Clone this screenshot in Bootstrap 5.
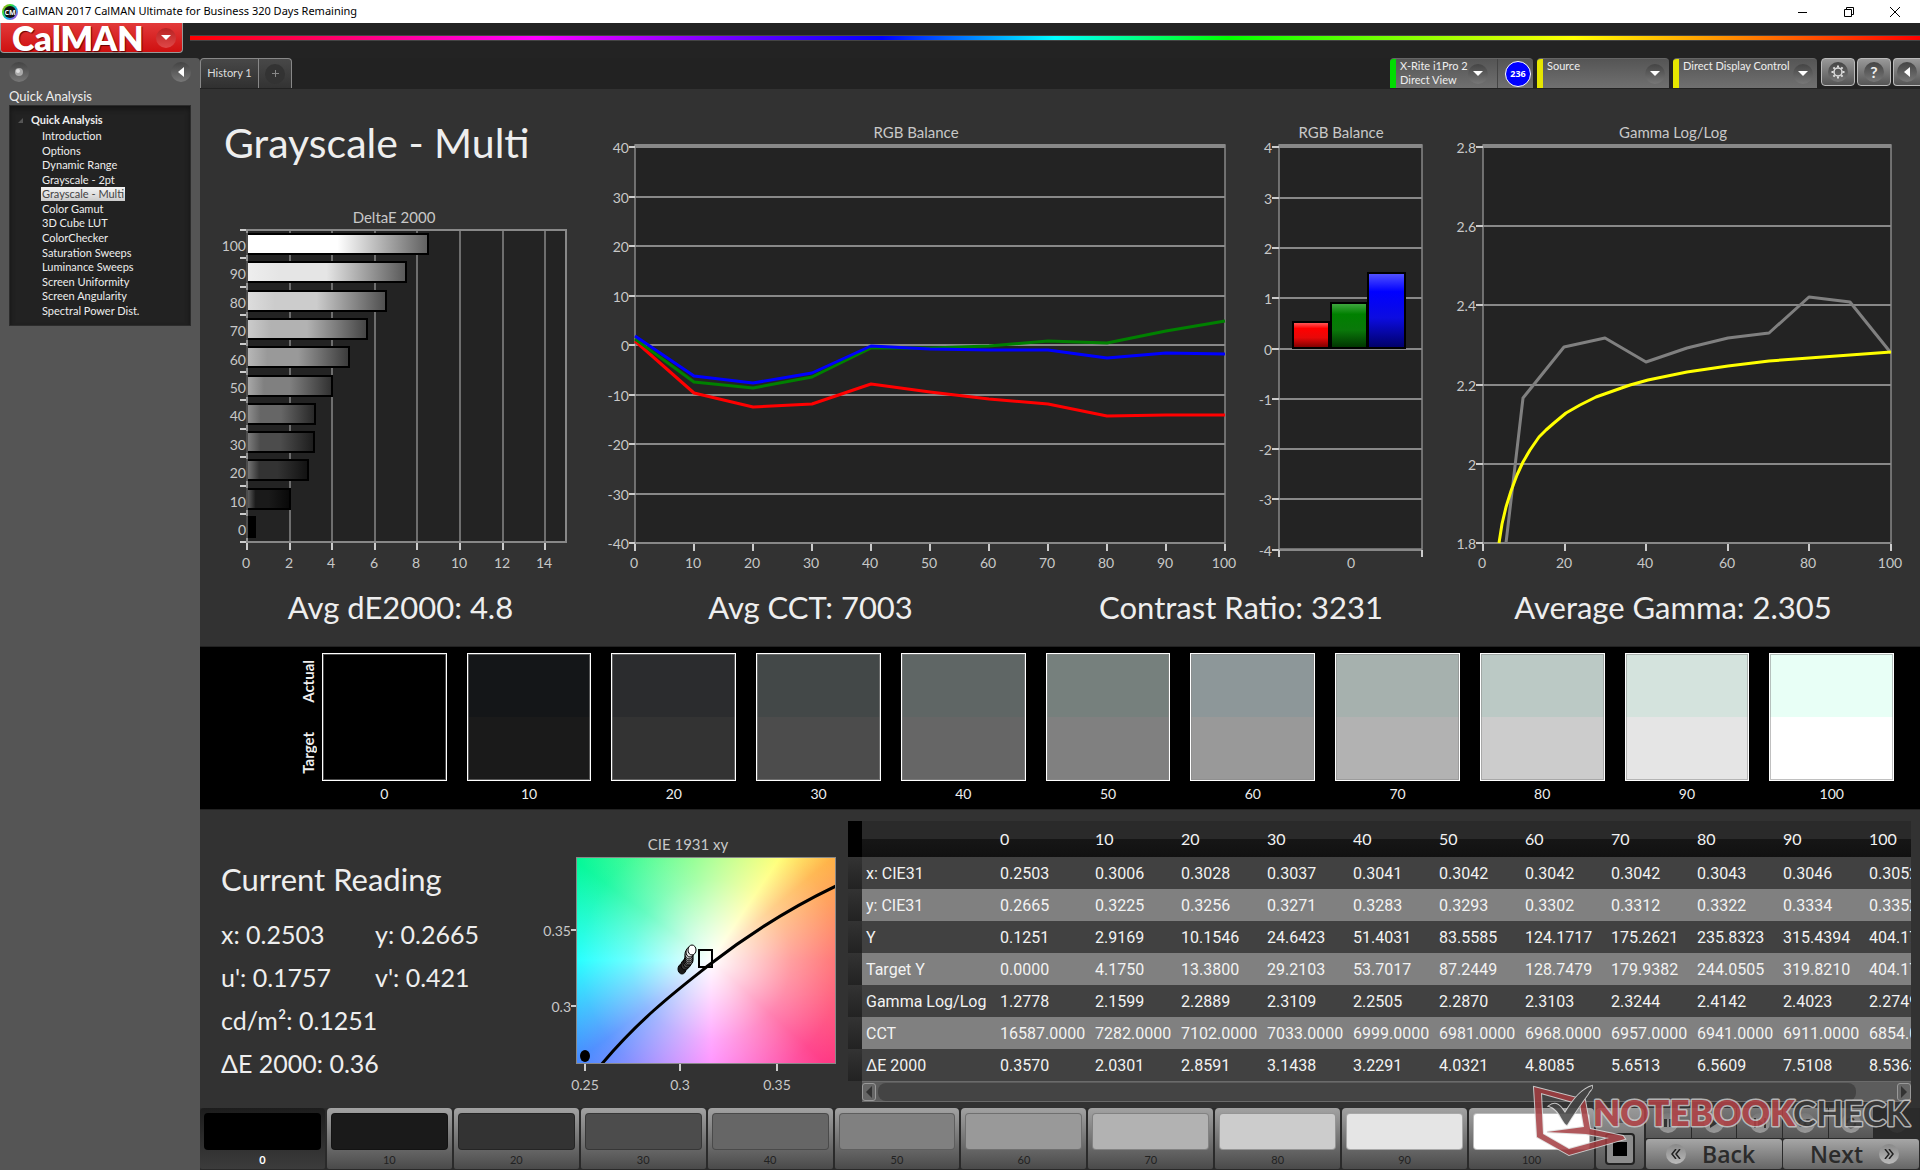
<!DOCTYPE html>
<html lang="en">
<head>
<meta charset="utf-8">
<meta name="viewport" content="width=device-width, initial-scale=1">
<title>CalMAN 2017 CalMAN Ultimate for Business</title>
<link href="https://cdn.jsdelivr.net/npm/bootstrap@5.3.0/dist/css/bootstrap.min.css" rel="stylesheet">
<style>
  body { font-family: Lato, "Open Sans", sans-serif; font-size: 11px; background: #222; color: #eee; }
  button { font: inherit; color: inherit; border: 0; padding: 0; }
  svg { display: block; }

  .titlebar { height: 23px; background: #fff; color: #000; font-family: "Noto Sans", sans-serif; padding: 0 2px; }
  .win-btn { width: 46px; height: 22px; background: none; }

  .brandbar { height: 35px; background: #232323; }
  .brand-btn { width: 183px; height: 30px; background: linear-gradient(#e23a3a, #cf1010); border: 1px solid #999; border-top: 0; border-radius: 0 0 4px 4px; color: #fff; padding: 0 6px 0 11px; }
  .brand-word { font: 800 34px/26px Lato, sans-serif; text-shadow: 1px 1px 1px #600; }
  .knob { width: 20px; height: 20px; border-radius: 50%; flex: none; }
  .knob-red { background: linear-gradient(#b82222, #e04848); }
  .knob-gray { background: linear-gradient(#444, #777); }
  .knob-dark { background: #333; }
  .spectrum { height: 6px; margin: 12px 0 0 7px; border: solid #444; border-width: 1px 0; background: linear-gradient(90deg, #f00, #f0f 20%, #00f 40%, #0ff 50%, #0f0 60%, #ff0 80%, #f00); }

  .sidebar { width: 200px; background: #555; border-top-right-radius: 4px; flex: none; }
  .sidebar-head { height: 28px; padding: 0 9px; }
  .sidebar-title { font-size: 13px; line-height: 21px; height: 19px; padding-left: 9px; margin: 0; font-weight: 400; }
  .tree-box { margin: 0 9px; height: 221px; background: #222; border: 1px solid #2c2c2c; box-shadow: inset 0 3px 5px #151515; padding: 7px 8px; }
  .tree-root { font-weight: 700; line-height: 14px; }
  .tree-list { height: 189px; padding-left: 23px; margin: 2px 0 0; }
  .tree-list a { color: #eee; text-decoration: none; line-height: 14px; padding: 0 1px; display: block; }
  .tree-list a.current { background: linear-gradient(#f4f4f4, #ccc); color: #444; }

  .tabstrip { height: 30px; background: #222; }
  .hist-tab { height: 30px; border: 1px solid #888; border-bottom: 0; background: linear-gradient(#484848, #303030); color: #ddd; border-radius: 4px 0 0 0; width: 59px; }
  .hist-add { height: 30px; width: 33px; border: 1px solid #888; border-left: 0; border-bottom: 0; background: linear-gradient(#484848, #333); border-radius: 0 4px 0 0; }
  .dev-tab { height: 30px; background: linear-gradient(#555, #707070); border-top: 1px solid #666; border-radius: 4px 4px 0 0; overflow: hidden; text-align: left; line-height: 14px; }
  .dev-meter { width: 143px; }
  .dev-source { width: 132px; }
  .dev-display { width: 144px; }
  .dev-meter .dev-name { width: 72px; }
  .dev-flag { width: 6px; flex: none; }
  .flag-ok { background: #0d0; }
  .flag-wait { background: #e6e600; }
  .badge-cell { border-left: 1px solid #444; margin-left: 9px; padding-left: 7px; }
  .tool-btn { width: 34px; height: 28px; border: 1px solid #bbb; border-radius: 4px; background: linear-gradient(#999, #555); }
  .tool-btn.help { margin: 0 2px; }
  .tool-btn.help .knob { font-size: 16px; line-height: 20px; }
  .tool-btn.edge { width: 27px; }
  .count-badge { width: 26px; height: 26px; border-radius: 50%; background: #00f; border: 1px solid #fff; font: 700 9px/24px "Open Sans", sans-serif; color: #fff; text-align: center; }

  .pane { background: #323232; border-top: 1px solid #222; }
  .page-title { font-size: 41px; line-height: 50px; height: 117px; padding: 29px 0 0 24px; margin: 0; font-weight: 400; }
  .w-delta { flex: 380 1 0; min-width: 0; }
  .w-balance { flex: 670 1 0; min-width: 0; }
  .w-bars { flex: 190 1 0; min-width: 0; }
  .w-gamma { flex: 480 1 0; min-width: 0; }
  .stats { font-size: 31px; line-height: 60px; height: 69px; display: grid; grid-template-columns: 401fr 419fr 442fr 422fr 36fr; text-align: center; }
  .strip { background: #000; border-top: 1px solid #222; height: 163px; padding: 6px 26px 0 100px; }
  .strip-side { width: 16px; height: 128px; margin-right: 6px; padding: 7px 0; font-size: 15px; font-weight: 700; }
  .strip-side span { writing-mode: vertical-rl; transform: rotate(180deg); line-height: 16px; }
  .swatch-row { gap: 20px; }
  .swatch { height: 128px; border: 1px solid #fff; box-shadow: inset 0 0 0 1px #8888; }
  .swatch-label { font-size: 14px; line-height: 26px; text-align: center; }

  .w-reading { flex: 330 1 0; min-width: 0; }
  .w-cie { flex: 318 1 0; min-width: 0; }
  .w-table { flex: 1072 1 0; min-width: 0; }
  .reading { padding: 52px 0 0 21px; }
  .reading h2 { font-size: 31px; line-height: 34px; margin: 0 0 17px; font-weight: 400; }
  .reading dl { font-size: 25px; line-height: 43px; margin: 0; }
  .reading dl > div:first-child, .reading dl > div:nth-child(3) { width: 154px; }
  .reading dl > div { white-space: nowrap; }
  .reading dt, .reading dd { font-weight: 400; margin: 0; display: inline; }
  .cie-field { width: 260px; height: 207px; border: 1px solid #888; background:
    radial-gradient(circle at 134px 102px, #fff 0, rgba(255,255,255,.75) 35px, rgba(255,255,255,.4) 80px, rgba(255,255,255,.12) 130px, rgba(255,255,255,0) 170px),
    conic-gradient(from 0deg at 134px 102px, #90ff70 0, #ffff60 34deg, #ffb040 50deg, #ff6060 90deg, #ff3080 132deg, #ff70ff 180deg, #4488ff 233deg, #10ffff 270deg, #00f898 306deg, #70ff70 350deg, #90ff70 360deg); }

  .grid-area { padding: 11px 9px 0 0; }
  .grid-wrap { overflow: hidden; }
  .results { width: 1103px; table-layout: fixed; border-collapse: collapse; font: 16px/20px Roboto, sans-serif; color: #f2f2f2; }
  .results .c-mark { width: 14px; }
  .results .c-name { width: 134px; }
  .results .c-first { width: 95px; }
  .results th, .results td { font-weight: 400; padding: 2px 0 0 4px; white-space: nowrap; height: 32px; }
  .results thead th { height: 36px; padding-top: 0; background: linear-gradient(#2a2a2a 50%, #161616 51%, #111); font-family: Lato, sans-serif; }
  .results thead th:first-child { background: #000; }
  .results tbody tr { background: #414141; }
  .results tbody tr:nth-child(even) { background: #808080; }
  .results tbody td:first-child { background: linear-gradient(#333, #222); }
  .hbar { height: 21px; margin-left: 14px; background: #5c5c5c; border: solid #6b6b6b; border-width: 1px 0; }
  .hbar-btn { width: 14px; height: 18px; border: 1px solid #999; border-radius: 3px; background: #666; flex: none; }
  .hbar-thumb { background: #444; border-radius: 8px; height: 18px; margin: 0 41px 0 2px; }

  .footbar { height: 62px; background: #2a2a2a; }
  .level-row { gap: 2px; }
  .level-btn { background: linear-gradient(#a2a2a2, #4a4a4a); border-radius: 4px 4px 2px 2px; height: 61px; padding: 5px 4px 0; color: #222; font-size: 11px; }
  .level-btn.active { background: linear-gradient(#1c1c1c, #3c3c3c); color: #fff; font-weight: 700; }
  .level-chip { height: 37px; border-radius: 4px; border: 1px solid #0004; }
  .level-text { line-height: 20px; }
  .stop-col { width: 48px; background: linear-gradient(#999, #555); border-radius: 4px; height: 61px; margin: 0 2px; flex: none; }
  .stop-btn { width: 30px; height: 32px; border: 2px solid #222; border-radius: 4px; background: #8c8c8c; }
  .stop-btn span { width: 14px; height: 14px; background: #000; }
  .transport { width: 273px; flex: none; margin-right: 1px; gap: 1px; }
  .transport-row { gap: 1px; }
  .play-btn { height: 30px; background: linear-gradient(#777, #555); }
  .play-btn.off { background: #2b2b2b; }
  .play-btn .knob { background: linear-gradient(#777, #999); }
  .play-btn.off .knob { background: #333; }
  .nav-btn { height: 30px; background: linear-gradient(#a6a6a6, #666); color: #2b2b2b; font: 600 23px/28px "Open Sans", sans-serif; border-radius: 3px; padding: 0 20px; gap: 16px; }
  .nav-btn .knob { background: linear-gradient(#888, #bbb); }
  .watermark { position: absolute; right: 6px; bottom: 8px; width: 384px; height: 80px; pointer-events: none; }

  svg .axis-text { fill: #c8c8c8; font-size: 14px; }
  svg .chart-title { fill: #c8c8c8; font-size: 15px; text-anchor: middle; }
</style>
<script src="https://cdn.jsdelivr.net/npm/bootstrap@5.3.0/dist/js/bootstrap.bundle.min.js"></script>
</head>
<body class="min-vh-100 d-flex flex-column position-relative overflow-x-hidden">

<header>
  <div class="titlebar d-flex align-items-center">
    <svg width="16" height="16" viewBox="0 0 16 16"><defs><linearGradient id="ring" x1="0" y1="0" x2="1" y2="1"><stop offset="0" stop-color="#f80"/><stop offset=".3" stop-color="#3d3"/><stop offset=".6" stop-color="#1ae"/><stop offset="1" stop-color="#e2c"/></linearGradient></defs><circle cx="8" cy="8" r="8" fill="url(#ring)"/><circle cx="8" cy="8" r="6" fill="#111"/><text x="8" y="10.500" font-size="7" font-weight="700" fill="#fff" text-anchor="middle" font-family="Open Sans">CM</text></svg>
    <span class="ps-1 me-auto">CalMAN 2017 CalMAN Ultimate for Business 320 Days Remaining</span>
    <button class="win-btn" aria-label="Minimize"><svg class="mx-auto" width="10" height="10"><path d="M0 5.500h9" stroke="#000"/></svg></button>
    <button class="win-btn" aria-label="Restore"><svg class="mx-auto" width="10" height="10" fill="none" stroke="#000"><path d="M.5 2.500h7v7h-7zM2.500 2.500v-2h7v7h-2"/></svg></button>
    <button class="win-btn" aria-label="Close"><svg class="mx-auto" width="10" height="10" stroke="#000"><path d="M0 0l10 10M10 0L0 10"/></svg></button>
  </div>
  <div class="brandbar d-flex">
    <button class="brand-btn d-flex justify-content-between align-items-center flex-shrink-0" aria-label="CalMAN menu"><span class="brand-word">CalMAN</span>
      <span class="knob knob-red d-flex align-items-center justify-content-center"><svg width="10" height="6"><path d="M0 0h10L5 5z" fill="#fff"/></svg></span></button>
    <div class="spectrum flex-fill"></div>
  </div>
</header>

<div class="d-flex flex-fill">
  <aside class="sidebar">
    <div class="sidebar-head d-flex justify-content-between align-items-center">
      <span class="knob knob-gray d-flex align-items-center justify-content-center"><svg width="8" height="8"><circle cx="4" cy="4" r="4" fill="#aaa"/><circle cx="3" cy="3" r="2" fill="#ddd"/></svg></span>
      <button class="knob knob-gray d-flex align-items-center justify-content-center" aria-label="Collapse"><svg width="6" height="10"><path d="M6 0v10L0 5z" fill="#fff"/></svg></button>
    </div>
    <h2 class="sidebar-title">Quick Analysis</h2>
    <nav class="tree-box">
      <div class="tree-root d-flex align-items-center"><svg class="me-2" width="5" height="5"><path d="M5 0v5H0z" fill="#555"/></svg>Quick Analysis</div>
      <ul class="tree-list list-unstyled d-flex flex-column justify-content-between align-items-start">
        <li><a href="#">Introduction</a></li><li><a href="#">Options</a></li><li><a href="#">Dynamic Range</a></li><li><a href="#">Grayscale - 2pt</a></li><li><a href="#" class="current">Grayscale - Multi</a></li><li><a href="#">Color Gamut</a></li><li><a href="#">3D Cube LUT</a></li><li><a href="#">ColorChecker</a></li><li><a href="#">Saturation Sweeps</a></li><li><a href="#">Luminance Sweeps</a></li><li><a href="#">Screen Uniformity</a></li><li><a href="#">Screen Angularity</a></li><li><a href="#">Spectral Power Dist.</a></li>
      </ul>
    </nav>
  </aside>

  <main class="flex-fill d-flex flex-column overflow-hidden">
    <div class="tabstrip d-flex">
      <button class="hist-tab">History 1</button>
      <button class="hist-add d-flex align-items-center justify-content-center me-auto" aria-label="Add tab"><span class="knob knob-dark d-flex align-items-center justify-content-center"><svg width="7" height="7" stroke="#888"><path d="M3.500 0v7M0 3.500h7"/></svg></span></button>

      <button class="dev-tab dev-meter d-flex me-1"><span class="dev-flag flag-ok h-100"></span><span class="dev-name ps-1 text-nowrap">X-Rite i1Pro 2<br>Direct View</span>
        <span class="knob knob-gray d-flex align-items-center justify-content-center align-self-center"><svg width="10" height="6"><path d="M0 0h10L5 5z" fill="#fff"/></svg></span>
        <span class="badge-cell h-100 d-flex align-items-center"><span class="count-badge">236</span></span></button>
      <button class="dev-tab dev-source d-flex me-1"><span class="dev-flag flag-wait h-100"></span><span class="ps-1 flex-fill">Source</span><span class="knob knob-gray d-flex align-items-center justify-content-center align-self-center me-1"><svg width="10" height="6"><path d="M0 0h10L5 5z" fill="#fff"/></svg></span></button>
      <button class="dev-tab dev-display d-flex me-1"><span class="dev-flag flag-wait h-100"></span><span class="ps-1 flex-fill text-nowrap">Direct Display Control</span><span class="knob knob-gray d-flex align-items-center justify-content-center align-self-center me-1"><svg width="10" height="6"><path d="M0 0h10L5 5z" fill="#fff"/></svg></span></button>
      <button class="tool-btn d-flex align-items-center justify-content-center" aria-label="Settings"><span class="knob knob-gray d-flex align-items-center justify-content-center"><svg width="14" height="14" viewBox="-7 -7 14 14" fill="none" stroke="#ddd"><circle r="4" stroke-width="1.500"/><path stroke-width="2" d="M0-6.500v2M0 4.500v2M-6.500 0h2M4.500 0h2M-4.600-4.600l1.400 1.400M3.200 3.200l1.400 1.400M-4.600 4.600l1.400-1.400M3.200-3.200l1.400-1.400"/></svg></span></button>
      <button class="tool-btn help d-flex align-items-center justify-content-center" aria-label="Help"><span class="knob knob-gray fw-bold text-center">?</span></button>
      <button class="tool-btn edge d-flex align-items-center justify-content-center border-end-0 rounded-end-0" aria-label="Hide"><span class="knob knob-gray d-flex align-items-center justify-content-center"><svg width="6" height="10"><path d="M6 0v10L0 5z" fill="#fff"/></svg></span></button>
    </div>

    <section class="pane">
      <div class="d-flex">
        <div class="w-delta"><h1 class="page-title text-nowrap">Grayscale - Multi</h1><svg id="deltae" class="w-100" viewBox="200 206 380 371"></svg></div>
        <div class="w-balance"><svg id="balance" class="w-100" viewBox="580 89 670 488"></svg></div>
        <div class="w-bars"><svg id="bars" class="w-100" viewBox="1250 89 190 488"></svg></div>
        <div class="w-gamma"><svg id="gamma" class="w-100" viewBox="1440 89 480 488"></svg></div>
      </div>
      <div class="stats"><span>Avg dE2000: 4.8</span><span>Avg CCT: 7003</span><span>Contrast Ratio: 3231</span><span>Average Gamma: 2.305</span></div>
    </section>

    <section class="strip d-flex">
      <div class="strip-side d-flex flex-column justify-content-between"><span>Actual</span><span>Target</span></div>
      <div id="swatches" class="swatch-row d-flex flex-fill"></div>
    </section>

    <section class="pane d-flex flex-fill">
      <div class="w-reading"><div class="reading">
        <h2>Current Reading</h2>
        <dl class="d-flex flex-wrap">
          <div><dt>x:</dt> <dd>0.2503</dd></div><div><dt>y:</dt> <dd>0.2665</dd></div>
          <div><dt>u':</dt> <dd>0.1757</dd></div><div><dt>v':</dt> <dd>0.421</dd></div>
          <div class="w-100"><dt>cd/m²:</dt> <dd>0.1251</dd></div>
          <div class="w-100"><dt>ΔE 2000:</dt> <dd>0.36</dd></div>
        </dl>
      </div></div>
      <div class="w-cie">
        <svg class="w-100" viewBox="530 810 318 298">
          <defs>
            <clipPath id="cieClip"><rect x="577" y="858" width="258" height="205"/></clipPath>
          </defs>
          <text class="chart-title" x="688" y="850">CIE 1931 xy</text>
          <foreignObject x="576" y="857" width="260" height="207"><div class="cie-field"></div></foreignObject>
          <path clip-path="url(#cieClip)" d="M601 1065C640 1018 680 988 709 965C745 937 790 908 836 886" fill="none" stroke="#000" stroke-width="3"/>
          <g stroke="#000">
            <ellipse cx="682" cy="969" rx="4" ry="5" fill="#1a1a1a"/><ellipse cx="685" cy="965" rx="4" ry="5" fill="#333"/><ellipse cx="687" cy="963" rx="4" ry="5" fill="#4c4c4c"/><ellipse cx="688" cy="961" rx="4" ry="5" fill="#666"/><ellipse cx="689" cy="960" rx="4" ry="5" fill="#808080"/><ellipse cx="689" cy="958" rx="4" ry="5" fill="#999"/><ellipse cx="689" cy="956" rx="4" ry="5" fill="#b2b2b2"/><ellipse cx="689" cy="954" rx="4" ry="5" fill="#ccc"/><ellipse cx="690" cy="952" rx="4" ry="5" fill="#e5e5e5"/><ellipse cx="692" cy="950" rx="4" ry="5" fill="#fff"/>
          </g>
          <ellipse cx="585" cy="1056" rx="5" ry="6"/>
          <rect x="699" y="950" width="13" height="17" fill="none" stroke="#000" stroke-width="2"/>
          <path d="M571 930h5M571 1006h5M585 1064v7M680 1064v7M777 1064v7" stroke="#ccc" stroke-width="2"/>
          <g class="axis-text"><g text-anchor="end"><text x="571" y="936">0.35</text><text x="571" y="1012">0.3</text></g>
          <g text-anchor="middle"><text x="585" y="1090">0.25</text><text x="680" y="1090">0.3</text><text x="777" y="1090">0.35</text></g></g>
        </svg>
      </div>
      <div class="w-table"><div class="grid-area">
        <div class="grid-wrap"><table class="results"><colgroup><col class="c-mark"><col class="c-name"><col class="c-first"></colgroup><thead id="thead"></thead><tbody id="tbody"></tbody></table></div>
        <div class="hbar d-flex align-items-center">
          <button class="hbar-btn d-flex align-items-center justify-content-center" aria-label="Scroll left"><svg width="6" height="12"><path d="M6 0v12L0 6z" fill="#333"/></svg></button>
          <div class="hbar-thumb flex-fill"></div>
          <button class="hbar-btn d-flex align-items-center justify-content-center" aria-label="Scroll right"><svg width="6" height="12"><path d="M0 0v12L6 6z" fill="#333"/></svg></button>
        </div>
      </div></div>
    </section>

    <footer class="footbar d-flex">
      <div id="levels" class="level-row d-flex flex-fill"></div>
      <div class="stop-col d-flex flex-column align-items-center justify-content-between pb-1">
        <svg width="12" height="20"><path d="M6 10l4 5H2z" fill="#555"/></svg>
        <button class="stop-btn d-flex align-items-center justify-content-center" aria-label="Stop"><span></span></button>
      </div>
      <div class="transport d-flex flex-column">
        <div class="transport-row d-flex">
          <button class="play-btn flex-fill" aria-label="Pause"><span class="knob d-flex mx-auto align-items-center justify-content-center"><svg width="8" height="8"><path d="M0 0h3v8H0zM5 0h3v8H5z" fill="#333"/></svg></span></button>
          <button class="play-btn flex-fill" aria-label="Play"><span class="knob d-flex mx-auto align-items-center justify-content-center"><svg width="8" height="10"><path d="M0 0l8 5-8 5z" fill="#333"/></svg></span></button>
          <button class="play-btn flex-fill" aria-label="Step"><span class="knob d-flex mx-auto align-items-center justify-content-center"><svg width="12" height="10"><path d="M0 0h2v10H0zM10 0h2v10h-2zM4 1l5 4-5 4z" fill="#333"/></svg></span></button>
          <button class="play-btn flex-fill" aria-label="Continuous"><span class="knob d-flex mx-auto align-items-center justify-content-center"><svg width="14" height="8" fill="none" stroke="#333" stroke-width="2"><circle cx="4" cy="4" r="3"/><circle cx="10" cy="4" r="3"/></svg></span></button>
          <button class="play-btn flex-fill" aria-label="Refresh"><span class="knob d-flex mx-auto align-items-center justify-content-center"><svg width="12" height="12" fill="none" stroke="#333" stroke-width="2"><path d="M2 6a4 4 0 0 1 7-3M10 6a4 4 0 0 1-7 3"/></svg></span></button>
          <button class="play-btn off flex-fill" aria-label="More"><span class="knob d-block mx-auto"></span></button>
        </div>
        <div class="transport-row d-flex">
          <button class="nav-btn w-50 d-flex align-items-center"><span class="knob d-flex align-items-center justify-content-center"><svg width="10" height="10" fill="none" stroke="#222" stroke-width="1.500"><path d="M5 0L1 5l4 5M9 0L5 5l4 5"/></svg></span>Back</button>
          <button class="nav-btn w-50 d-flex align-items-center justify-content-end">Next<span class="knob d-flex align-items-center justify-content-center"><svg width="10" height="10" fill="none" stroke="#222" stroke-width="1.500"><path d="M1 0l4 5-4 5M5 0l4 5-4 5"/></svg></span></button>
        </div>
      </div>
    </footer>
  </main>
</div>

<svg class="watermark" viewBox="1530 1082 384 80">
  <g opacity=".85">
    <path d="M1534 1087L1585 1100L1590 1129L1623 1136L1625 1139L1569 1155L1537 1137ZM1541 1093L1543 1134L1569 1149L1609 1138L1586 1134L1547 1132L1584 1127L1580 1104Z" fill="#a33c40" fill-rule="evenodd" stroke="#ddd" stroke-width="2" paint-order="stroke"/>
    <path d="M1549 1106C1556 1101 1560 1105 1565 1113C1574 1098 1582 1089 1592 1086C1593 1090 1590 1089 1588 1094C1580 1105 1573 1115 1567 1125C1562 1123 1560 1109 1549 1106Z" fill="#444" stroke="#ddd" stroke-width="2" paint-order="stroke"/>
    <g font-family="Lato, sans-serif" font-size="35" font-weight="700" stroke="#c8c8c8" stroke-width="3" paint-order="stroke" stroke-linejoin="round"><text x="1593" y="1126" font-weight="800" fill="#b34246">NOTEBOOK</text><text x="1793" y="1126" fill="#383838">CHECK</text></g>
  </g>
</svg>

<script>
  const levels = [0, 10, 20, 30, 40, 50, 60, 70, 80, 90, 100];
  const target = ['#000', '#1a1a1a', '#333', '#4c4c4c', '#666', '#808080', '#999', '#b2b2b2', '#ccc', '#e5e5e5', '#fff'];
  const actual = ['#000', '#141618', '#2b2c2e', '#434848', '#5f6665', '#76807d', '#8d9799', '#a6b1ae', '#bbc9c5', '#d4e3dd', '#e8fff6'];
  const put = (id, html) => document.getElementById(id).innerHTML = html;
  const text = (x, y, s, anchor) => `<text class="axis-text" x="${x}" y="${y}" text-anchor="${anchor}">${s}</text>`;
  const line = (x1, y1, x2, y2, c, w) => `<path d="M${x1} ${y1}L${x2} ${y2}" stroke="${c}" stroke-width="${w}" fill="none"/>`;
  const poly = (pts, c, w) => `<polyline points="${pts}" stroke="${c}" stroke-width="${w}" fill="none" stroke-linejoin="round"/>`;

  /* DeltaE 2000 horizontal bars */
  const de = [0.357, 2.0301, 2.8591, 3.1438, 3.2291, 4.0321, 4.8085, 5.6513, 6.5609, 7.5108, 8.5363];
  let s = '<defs>' + target.map((c, i) => `<linearGradient id="g${i}"><stop offset="0" stop-color="${['#333','#666','#7a7a7a','#808080','#909090','#aaa','#b8b8b8','#ccc','#ddd','#eee','#fff'][i]}"/><stop offset=".2" stop-color="${c}"/><stop offset=".5" stop-color="${c}"/><stop offset="1" stop-color="${['#000','#080808','#111','#1c1c1c','#262626','#303030','#3a3a3a','#444','#4e4e4e','#585858','#606060'][i]}"/></linearGradient>`).join('') + '</defs>';
  s += '<text class="chart-title" x="394" y="223">DeltaE 2000</text><rect x="247" y="230" width="319" height="312" fill="#232323" stroke="#888" stroke-width="2"/>';
  for (let v = 0; v < 15; v += 2) { const x = Math.round(247 + v * 21.3); if (v) s += line(x, 231, x, 541, '#888', 1.5); s += line(x, 543, x, 550, '#ccc', 2) + text(x - 1, 568, v, 'middle'); }
  for (let k = 0; k <= 11; k++) { const y = Math.round(230 + k * 28.4); s += line(240, y, 246, y, '#ccc', 2); if (k < 11) { const i = 10 - k, top = Math.round(234 + k * 28.3); s += text(246, y + 21, levels[i], 'end') + `<rect x="247" y="${top}" width="${Math.round(de[i] * 21.2)}" height="20" fill="url(#g${i})" stroke="#000" stroke-width="2"/>`; } }
  put('deltae', s + line(247, 230, 247, 542, '#999', 1));

  /* RGB balance over the gray ramp */
  s = '<text class="chart-title" x="916" y="138">RGB Balance</text><rect x="635" y="145" width="590" height="398" fill="#232323" stroke="#888" stroke-width="1.500"/>' + line(635, 146, 1225, 146, '#888', 4);
  for (let v = 40; v >= -40; v -= 10) { const y = Math.round(345 - v * 4.95); s += line(635, y, 1225, y, '#888', 2) + line(629, y, 635, y, '#ccc', 2) + text(629, y + 6, v, 'end'); }
  levels.forEach(v => { const x = 635 + v * 5.9; s += line(x, 544, x, 551, '#ccc', 2) + text(x - 1, 568, v, 'middle'); });
  const ramp = ys => ys.map((y, i) => (635 + i * 59) + ',' + y).join(' ');
  s += poly(ramp([341, 393, 407, 404, 384, 392, 399, 404, 416, 415, 415]), '#f00', 3) + poly(ramp([339, 382, 388, 377, 348, 348, 346, 341, 343, 331, 321]), '#008000', 3) + poly(ramp([336, 376, 383, 373, 346, 349, 350, 350, 358, 353, 354]), '#00f', 3);
  put('balance', s);

  /* RGB balance bars for the current patch */
  s = '<defs><linearGradient id="br" x2="0" y2="1"><stop stop-color="#f66"/><stop offset=".25" stop-color="#f00"/><stop offset=".6" stop-color="#e80808"/><stop offset="1" stop-color="#700"/></linearGradient><linearGradient id="bg" x2="0" y2="1"><stop stop-color="#4a4"/><stop offset=".25" stop-color="#008000"/><stop offset=".6" stop-color="#0a780a"/><stop offset="1" stop-color="#030"/></linearGradient><linearGradient id="bb" x2="0" y2="1"><stop stop-color="#55f"/><stop offset=".25" stop-color="#00f"/><stop offset=".6" stop-color="#0c0ce0"/><stop offset="1" stop-color="#006"/></linearGradient></defs><text class="chart-title" x="1341" y="138">RGB Balance</text><rect x="1279" y="145" width="143" height="404" fill="#232323" stroke="#888" stroke-width="1.500"/>' + line(1279, 146, 1422, 146, '#888', 4);
  for (let v = 4; v >= -4; v--) { const y = Math.round(348.5 - v * 50.3); s += line(1279, y, 1422, y, '#888', 2) + line(1272, y, 1279, y, '#ccc', 2) + text(1272, y + 6, v, 'end'); }
  s += line(1279, 550, 1279, 557, '#ccc', 2) + line(1422, 550, 1422, 557, '#ccc', 2) + text(1351, 568, 0, 'middle');
  s += '<g stroke="#000" stroke-width="2"><rect x="1293" y="322" width="36" height="26" fill="url(#br)"/><rect x="1331" y="303" width="36" height="45" fill="url(#bg)"/><rect x="1368" y="273" width="37" height="75" fill="url(#bb)"/></g>';
  put('bars', s);

  /* Gamma log/log */
  s = '<text class="chart-title" x="1673" y="138">Gamma Log/Log</text><rect x="1483" y="145" width="408" height="398" fill="#232323" stroke="#888" stroke-width="1.500"/>' + line(1483, 146, 1891, 146, '#888', 4);
  for (let k = 0; k <= 5; k++) { const y = Math.round(147 + k * 79.2), x = Math.round(1483 + k * 81.6); s += line(1483, y, 1891, y, '#888', 2) + line(1476, y, 1483, y, '#ccc', 2) + text(1476, y + 6, ['2.8', '2.6', '2.4', '2.2', '2', '1.8'][k], 'end') + line(x, 544, x, 551, '#ccc', 2) + text(x - 1, 568, k * 20, 'middle'); }
  s += poly('1506,543 1523,398 1564,347 1605,338 1646,362 1687,348 1728,338 1769,333 1809,297 1850,302 1891,353', '#808080', 3);
  s += poly('1499,543 1502,524 1506,507 1511,491 1517,475 1523,462 1530,450 1539,437 1546,430 1554,423 1566,413 1580,405 1596,397 1613,391 1630,385 1648,380 1687,372 1728,366 1769,361 1809,358 1850,355 1891,352', '#ff0', 3);
  put('gamma', s);

  put('swatches', levels.map((v, i) => `<div class="flex-fill w-100"><div class="swatch" style="background:linear-gradient(${actual[i]} 50%,${target[i]} 50%)"></div><div class="swatch-label">${v}</div></div>`).join(''));
  put('levels', levels.map((v, i) => `<button class="level-btn w-100${i ? '' : ' active'}"><span class="level-chip d-block" style="background:${target[i]}"></span><span class="level-text d-block">${v}</span></button>`).join(''));

  const rows = [
    ['x: CIE31', '0.2503 0.3006 0.3028 0.3037 0.3041 0.3042 0.3042 0.3042 0.3043 0.3046 0.3052'],
    ['y: CIE31', '0.2665 0.3225 0.3256 0.3271 0.3283 0.3293 0.3302 0.3312 0.3322 0.3334 0.3352'],
    ['Y', '0.1251 2.9169 10.1546 24.6423 51.4031 83.5585 124.1717 175.2621 235.8323 315.4394 404.1700'],
    ['Target Y', '0.0000 4.1750 13.3800 29.2103 53.7017 87.2449 128.7479 179.9382 244.0505 319.8210 404.1700'],
    ['Gamma Log/Log', '1.2778 2.1599 2.2889 2.3109 2.2505 2.2870 2.3103 2.3244 2.4142 2.4023 2.2749'],
    ['CCT', '16587.0000 7282.0000 7102.0000 7033.0000 6999.0000 6981.0000 6968.0000 6957.0000 6941.0000 6911.0000 6854.0000'],
    ['ΔE 2000', '0.3570 2.0301 2.8591 3.1438 3.2291 4.0321 4.8085 5.6513 6.5609 7.5108 8.5363']
  ];
  put('thead', '<tr><th></th><th></th>' + levels.map(v => `<th scope="col">${v}</th>`).join('') + '</tr>');
  put('tbody', rows.map(r => `<tr><td></td><th scope="row">${r[0]}</th>` + r[1].split(' ').map(v => `<td>${v}</td>`).join('') + '</tr>').join(''));
</script>
</body>
</html>
